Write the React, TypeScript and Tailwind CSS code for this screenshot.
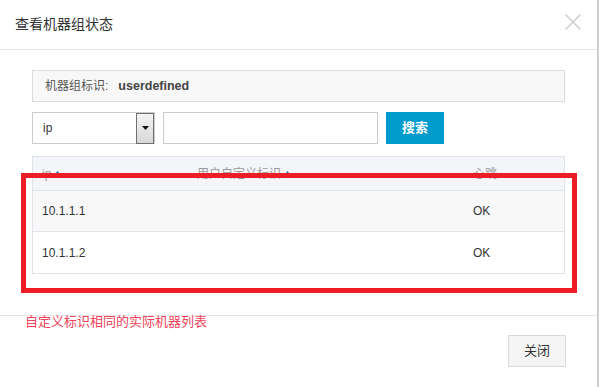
import { X } from 'lucide-react';

const font = { fontFamily: '"Liberation Sans", "Noto Sans CJK SC", sans-serif' };

function SortUp() {
  return (
    <svg width="9" height="6" viewBox="0 0 9 6" className="ml-[2px] inline-block align-[1px]">
      <path d="M4.5 0 L9 6 L0 6 Z" fill="#0a6fc2" />
    </svg>
  );
}

export default function App() {
  const rows = [
    { ip: '10.1.1.1', id: '', beat: 'OK' },
    { ip: '10.1.1.2', id: '', beat: 'OK' },
  ];

  return (
    <div
      className="relative w-[599px] h-[387px] bg-white border-r-2 border-[#cfcfcf] overflow-hidden text-[#333]"
      style={font}
    >
      <div className="absolute right-[-2px] top-0 w-[2px] h-[17px] bg-[#2d8fb8]" />

      {/* Header */}
      <div className="h-[50px] flex items-center justify-between border-b border-[#e5e5e5] pl-[15px] pr-[10px]">
        <h2 className="text-[14px] text-[#333]">查看机器组状态</h2>
        <X className="w-[28px] h-[28px] text-[#c8c8c8] -mt-[6px]" strokeWidth={1.1} />
      </div>

      {/* Body */}
      <div className="px-[32px] pt-[20px] h-[265px]">
        <div className="h-[32px] bg-[#f8f8f8] border border-[#dcdcdc] flex items-center pl-[12px] text-[12px]">
          <span className="text-[#555]">机器组标识:</span>
          <span className="ml-[10px] font-bold text-[12.5px] text-[#444]">userdefined</span>
        </div>

        <div className="flex items-center mt-[10px] h-[32px]">
          <div className="w-[123px] h-[32px] border border-[#cccccc] flex items-center justify-between">
            <span className="pl-[10px] text-[12px] text-[#333]">ip</span>
            <div className="w-[18px] h-[31px] border border-[#707070] bg-gradient-to-b from-[#f4f4f4] to-[#d8d8d8] flex items-center justify-center">
              <svg width="7" height="4" viewBox="0 0 7 4">
                <path d="M0 0 L7 0 L3.5 4 Z" fill="#111" />
              </svg>
            </div>
          </div>
          <div className="ml-[8px] w-[215px] h-[32px] border border-[#cccccc]" />
          <button className="ml-[8px] w-[58px] h-[32px] bg-[#009bcd] text-white text-[13px] font-bold">
            搜索
          </button>
        </div>

        <div className="mt-[12px] border border-[#dfe4ea] text-[12px]">
          <div className="h-[34px] bg-[#f3f5f8] flex items-center border-b border-[#dfe4ea] text-[#999]">
            <div className="w-[164px] pl-[9px]">ip<SortUp /></div>
            <div className="w-[276px]">用户自定义标识<SortUp /></div>
            <div className="flex-1">心跳</div>
          </div>
          {rows.map((r, i) => (
            <div
              key={r.ip}
              className={`h-[41px] flex items-center text-[#333] ${
                i === 0 ? 'bg-[#f8f8f9] border-b border-[#dfe4ea]' : 'bg-white'
              }`}
            >
              <div className="w-[164px] pl-[9px]">{r.ip}</div>
              <div className="w-[276px]">{r.id}</div>
              <div className="flex-1">{r.beat}</div>
            </div>
          ))}
        </div>
      </div>

      {/* Footer */}
      <div className="border-t border-[#e5e5e5] flex justify-end pr-[31px] pt-[19px]">
        <button className="w-[58px] h-[32px] bg-[#f5f5f5] border border-[#d9d9d9] text-[13px] text-[#333]">
          关闭
        </button>
      </div>

      {/* Annotation overlay */}
      <div className="absolute left-[21px] top-[173px] w-[556px] h-[120px] border-[5px] border-[#ee1d25]" />
      <div
        className="absolute left-[25px] top-[311px] text-[13px] text-[#f0435a]"
        style={{ fontFamily: '"Noto Sans CJK SC", sans-serif' }}
      >
        自定义标识相同的实际机器列表
      </div>
    </div>
  );
}
